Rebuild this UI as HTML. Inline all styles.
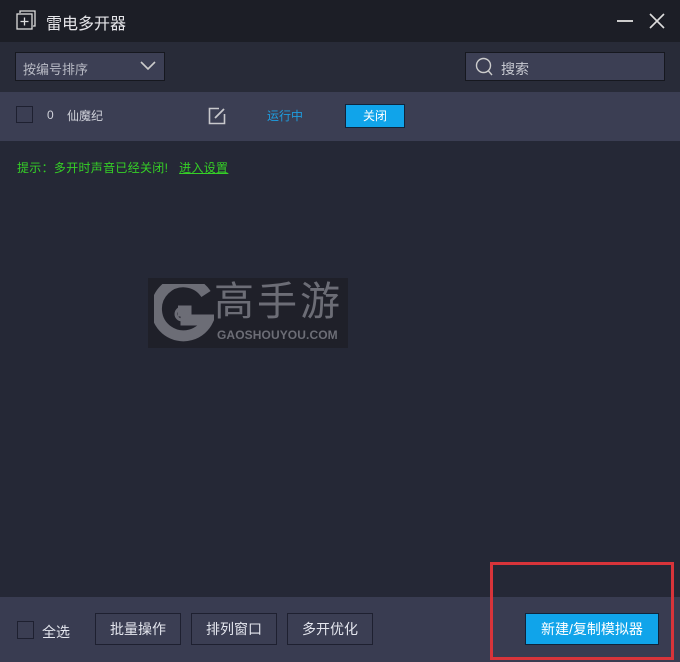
<!DOCTYPE html>
<html><head><meta charset="utf-8"><style>
*{margin:0;padding:0;box-sizing:border-box}
body{width:680px;height:662px;background:#252836;font-family:"Liberation Sans","Noto Sans CJK SC",sans-serif;position:relative;overflow:hidden;color:#d0d2da}
.a{position:absolute}
.title{left:0;top:0;width:680px;height:42px;background:#1c1e26}
.tool{left:0;top:42px;width:680px;height:50px;background:#282b38}
.row{left:0;top:92px;width:680px;height:49px;background:#3b3e53}
.bot{left:0;top:597px;width:680px;height:65px;background:#393c51}
.btn{border:1px solid #1e2030;background:#3b3e53;color:#e4e6ee;font-size:14px;text-align:center;line-height:30px;height:32px}
.cb{border:1px solid #1e2030;background:#3b3e53}
</style></head><body>
<div class="a title"></div>
<svg class="a" style="left:15px;top:9px" width="22" height="22" viewBox="0 0 22 22"><path d="M5 4V2h15v15h-2" fill="none" stroke="#ddd" stroke-width="1.3"/><rect x="2" y="5" width="15" height="15" fill="none" stroke="#ddd" stroke-width="1.3"/><path d="M9.5 8.5v8M5.5 12.5h8" stroke="#ddd" stroke-width="1.3"/></svg>
<div class="a" style="left:46px;top:10px;font-size:16px;color:#e6e6ea">雷电多开器</div>
<div class="a" style="left:617px;top:20px;width:16px;height:2px;background:#ccc"></div>
<svg class="a" style="left:649px;top:13px" width="16" height="16"><path d="M1 1L15 15M15 1L1 15" stroke="#ddd" stroke-width="1.6"/></svg>
<div class="a tool"></div>
<div class="a" style="left:15px;top:52px;width:150px;height:29px;border:1px solid #16181f;background:#3c3f54"></div>
<div class="a" style="left:23px;top:59px;font-size:13px;color:#b8bac4">按编号排序</div>
<svg class="a" style="left:139px;top:60px" width="18" height="12"><path d="M2 2l7 7 7-7" fill="none" stroke="#ccc" stroke-width="1.6"/></svg>
<div class="a" style="left:465px;top:52px;width:200px;height:29px;border:1px solid #16181f;background:#3c3f54"></div>
<svg class="a" style="left:474px;top:56px" width="22" height="22"><circle cx="9.5" cy="9.5" r="7" fill="none" stroke="#ccc" stroke-width="1.4"/><path d="M14 14.5l4 4.5" stroke="#ccc" stroke-width="1.4"/></svg>
<div class="a" style="left:501px;top:59px;font-size:14px;color:#c8cad2">搜索</div>
<div class="a row"></div>
<div class="a cb" style="left:16px;top:106px;width:17px;height:17px"></div>
<div class="a" style="left:47px;top:108px;font-size:12px">0</div>
<div class="a" style="left:67px;top:107px;font-size:12px">仙魔纪</div>
<svg class="a" style="left:208px;top:107px" width="18" height="18"><path d="M11 1.5H1.5v15h15V7" fill="none" stroke="#c8c8cc" stroke-width="1.6"/><path d="M7 11L16 2" stroke="#c8c8cc" stroke-width="1.8"/></svg>
<div class="a" style="left:267px;top:107px;font-size:12px;color:#1e9de0">运行中</div>
<div class="a" style="left:345px;top:104px;width:60px;height:24px;background:#10a4ea;border:1px solid #10243a;color:#fff;font-size:12px;text-align:center;line-height:22px">关闭</div>
<div class="a" style="left:17px;top:159px;font-size:12px;color:#35d026;letter-spacing:0.3px">提示：多开时声音已经关闭!&nbsp;&nbsp;&nbsp;<span style="text-decoration:underline">进入设置</span></div>
<div class="a" style="left:148px;top:278px;width:200px;height:70px;background:#1f2029"></div>
<svg class="a" style="left:154px;top:284px" width="60" height="58"><path d="M52 10A27 27 0 1 0 54 36H32v-9h-8" fill="none" stroke="#6c6d76" stroke-width="11"/><circle cx="28" cy="30" r="6" fill="none" stroke="#6c6d76" stroke-width="3"/></svg>
<div class="a" style="left:214px;top:280px;font-size:40px;line-height:44px;color:#6c6d76;letter-spacing:3px">高手游</div>
<div class="a" style="left:217px;top:328px;font-size:12px;color:#6c6d76;font-weight:bold;letter-spacing:0.1px">GAOSHOUYOU.COM</div>
<div class="a bot"></div>
<div class="a cb" style="left:17px;top:621px;width:17px;height:18px"></div>
<div class="a" style="left:42px;top:622px;font-size:14px;color:#e4e6ee">全选</div>
<div class="a btn" style="left:95px;top:613px;width:86px">批量操作</div>
<div class="a btn" style="left:191px;top:613px;width:86px">排列窗口</div>
<div class="a btn" style="left:287px;top:613px;width:86px">多开优化</div>
<div class="a btn" style="left:525px;top:613px;width:134px;background:#10a4ea;color:#fff;border-color:#10243a">新建/复制模拟器</div>
<div class="a" style="left:490px;top:562px;width:184px;height:98px;border:3px solid #d8343a"></div>
</body></html>
